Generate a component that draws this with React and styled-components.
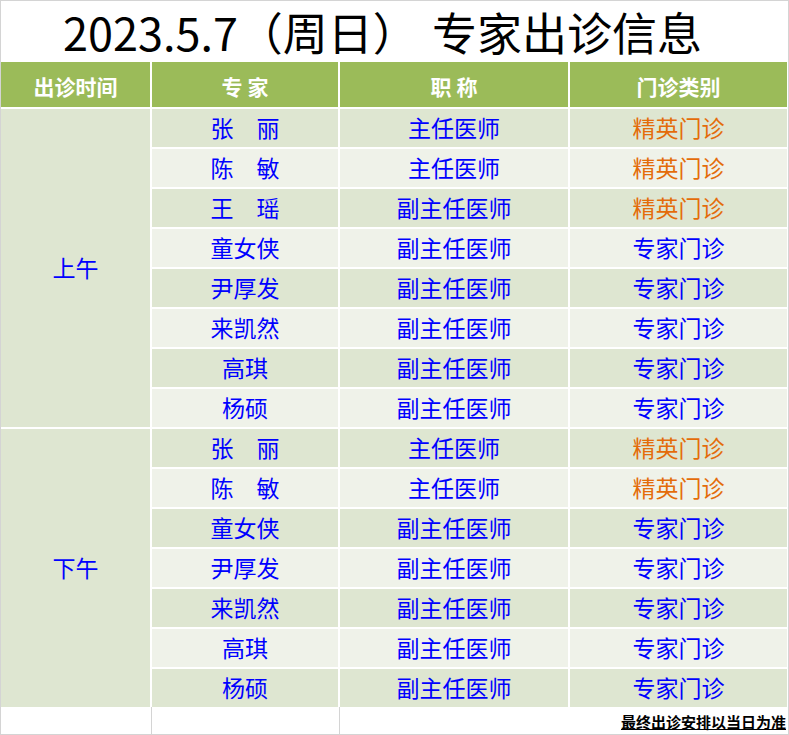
import React from "react";
import styled, { createGlobalStyle } from "styled-components";

const GlobalStyle = createGlobalStyle`
  html, body {
    margin: 0;
    padding: 0;
    background: #ffffff;
  }
  body {
    font-family: "Noto Sans CJK SC", "Noto Sans", sans-serif;
  }
`;

const Sheet = styled.div`
  width: 789px;
  height: 735px;
  box-sizing: border-box;
  border: 1px solid #d4d4d4;
  background: #ffffff;
  overflow: hidden;
`;

const Title = styled.div`
  height: 61px;
  display: flex;
  align-items: center;
  padding-left: 62px;
  font-size: 45px;
  color: #000000;
  white-space: pre;
  line-height: 1;
`;

const TitleTail = styled.span`
  margin-left: 14px;
`;

const Table = styled.div`
  display: grid;
  grid-template-columns: 149px 186px 228px 217px;
  grid-template-rows: 45px repeat(15, 38px);
  row-gap: 2px;
  column-gap: 2px;
  width: 786px;
`;

const HeadCell = styled.div`
  background: #9bbb59;
  color: #ffffff;
  font-weight: 700;
  font-size: 21px;
  display: flex;
  align-items: center;
  justify-content: center;
  padding-top: 2px;
  white-space: pre;
`;

const Cell = styled.div`
  background: ${(p) => (p.$dark ? "#dee6d1" : "#eff2e9")};
  color: ${(p) => (p.$orange ? "#e46c0a" : "#0000ff")};
  font-size: 23px;
  display: flex;
  align-items: center;
  justify-content: center;
  padding-bottom: 2px;
  box-sizing: border-box;
  white-space: pre;
`;

const TimeCell = styled(Cell)`
  grid-column: 1;
  grid-row: ${(p) => p.$rows};
`;

const Footer = styled.div`
  display: grid;
  grid-template-columns: 151px 188px 1fr;
  height: 27px;
`;

const FootCell = styled.div`
  border-right: ${(p) => (p.$line ? "1px solid #d4d4d4" : "none")};
  box-sizing: border-box;
`;

const Note = styled.div`
  display: flex;
  align-items: center;
  justify-content: flex-end;
  padding-right: 2px;
  padding-top: 2px;
  font-size: 15px;
  font-weight: 700;
  color: #000000;
  text-decoration: underline;
  text-underline-offset: 1px;
`;

const am = [
  ["张　丽", "主任医师", "精英门诊"],
  ["陈　敏", "主任医师", "精英门诊"],
  ["王　瑶", "副主任医师", "精英门诊"],
  ["童女侠", "副主任医师", "专家门诊"],
  ["尹厚发", "副主任医师", "专家门诊"],
  ["来凯然", "副主任医师", "专家门诊"],
  ["高琪", "副主任医师", "专家门诊"],
  ["杨硕", "副主任医师", "专家门诊"],
];

const pm = [
  ["张　丽", "主任医师", "精英门诊"],
  ["陈　敏", "主任医师", "精英门诊"],
  ["童女侠", "副主任医师", "专家门诊"],
  ["尹厚发", "副主任医师", "专家门诊"],
  ["来凯然", "副主任医师", "专家门诊"],
  ["高琪", "副主任医师", "专家门诊"],
  ["杨硕", "副主任医师", "专家门诊"],
];

export default function App() {
  const rows = [...am, ...pm];
  return (
    <>
      <GlobalStyle />
      <Sheet>
        <Title>
          2023.5.7（周日）<TitleTail>专家出诊信息</TitleTail>
        </Title>
        <Table>
          <HeadCell>出诊时间</HeadCell>
          <HeadCell>专 家</HeadCell>
          <HeadCell>职 称</HeadCell>
          <HeadCell>门诊类别</HeadCell>
          <TimeCell $dark $rows="2 / span 8">上午</TimeCell>
          <TimeCell $dark $rows="10 / span 7">下午</TimeCell>
          {rows.map(([name, title, kind], i) => {
            const dark = i % 2 === 0;
            const orange = kind === "精英门诊";
            return (
              <React.Fragment key={i}>
                <Cell $dark={dark} style={{ gridColumn: 2, gridRow: i + 2 }}>
                  {name}
                </Cell>
                <Cell $dark={dark} style={{ gridColumn: 3, gridRow: i + 2 }}>
                  {title}
                </Cell>
                <Cell
                  $dark={dark}
                  $orange={orange}
                  style={{ gridColumn: 4, gridRow: i + 2 }}
                >
                  {kind}
                </Cell>
              </React.Fragment>
            );
          })}
        </Table>
        <Footer>
          <FootCell $line />
          <FootCell $line />
          <Note>最终出诊安排以当日为准</Note>
        </Footer>
      </Sheet>
    </>
  );
}
